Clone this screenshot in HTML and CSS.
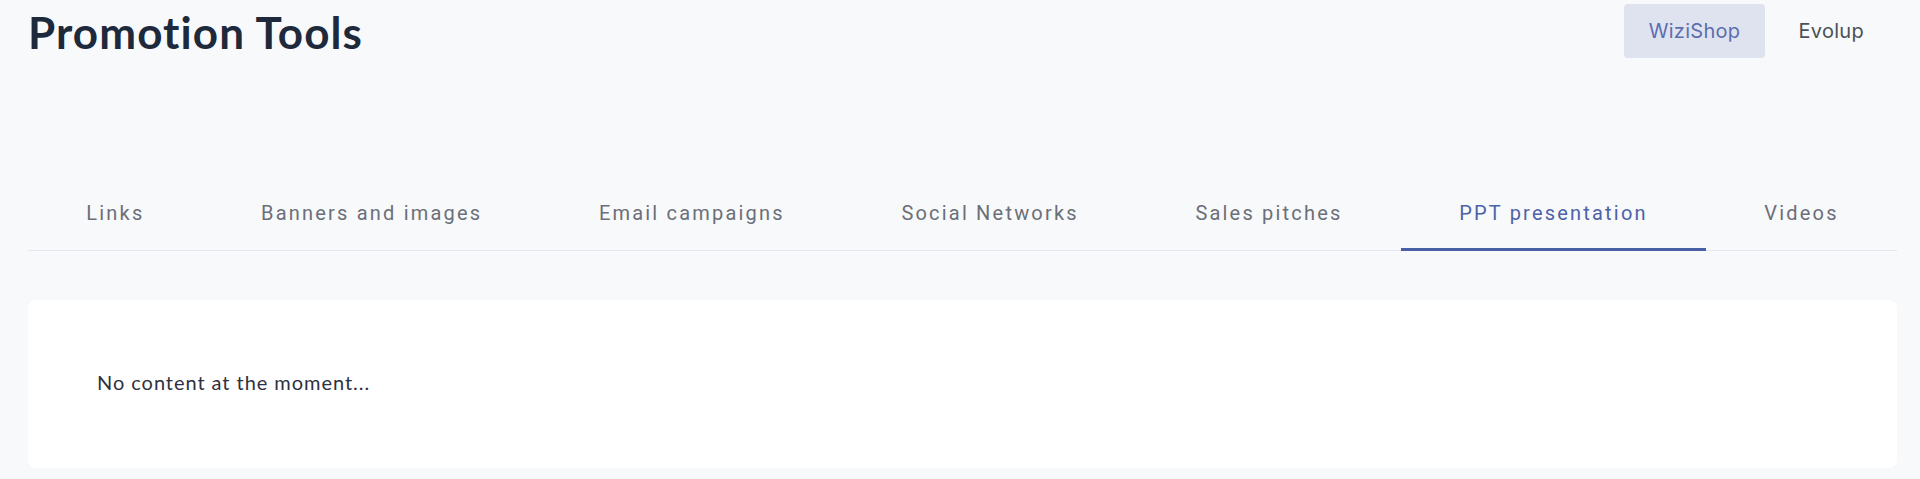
FILE: index.html
```html
<!DOCTYPE html>
<html lang="en">
<head>
<meta charset="utf-8">
<title>Promotion Tools</title>
<link rel="stylesheet" href="styles.css">
</head>
<body>
<div class="page">
  <header class="header">
    <h1 class="title">Promotion Tools</h1>
    <div class="switch">
      <button class="switch-btn is-active">WiziShop</button>
      <button class="switch-btn">Evolup</button>
    </div>
  </header>
  <nav class="tabs">
    <a class="tab">Links</a>
    <a class="tab">Banners and images</a>
    <a class="tab">Email campaigns</a>
    <a class="tab">Social Networks</a>
    <a class="tab">Sales pitches</a>
    <a class="tab is-active">PPT presentation</a>
    <a class="tab">Videos</a>
  </nav>
  <section class="card">
    <p class="empty">No content at the moment...</p>
  </section>
</div>
</body>
</html>
```

FILE: styles.css
```css
html, body {
  margin: 0;
  padding: 0;
  background: #f8f9fb;
}
body {
  font-family: "Lato", "Noto Sans", sans-serif;
}
.page {
  padding: 0 23px 0 28px;
}
.header {
  display: flex;
  justify-content: space-between;
  align-items: flex-start;
  padding-top: 4px;
}
.title {
  margin: 2px 0 0 0;
  font-family: "Lato", sans-serif;
  font-weight: 700;
  font-size: 44px;
  line-height: 52px;
  color: #1e293b;
  letter-spacing: 1.1px;
}
.switch {
  display: flex;
  gap: 8px;
  margin-right: 8px;
}
.switch-btn {
  border: 0;
  border-radius: 4px;
  background: transparent;
  font-family: "Inter", sans-serif;
  font-size: 20px;
  line-height: 22px;
  padding: 16px 25px;
  color: #4b5058;
  letter-spacing: 0.3px;
  cursor: pointer;
}
.switch-btn.is-active {
  background: #dfe3ef;
  color: #5b6eb0;
}
.tabs {
  display: flex;
  margin-top: 129px;
  border-bottom: 1px solid #e2e8f0;
}
.tab {
  flex: 1 1 auto;
  text-align: center;
  font-family: "Roboto", sans-serif;
  font-size: 20px;
  line-height: 24px;
  letter-spacing: 2.2px;
  color: #6b6f78;
  padding: 14px 0 23px;
  border-bottom: 3px solid transparent;
  margin-bottom: -1px;
  cursor: pointer;
}
.tab.is-active {
  color: #4d62a8;
  border-bottom-color: #4a5ea6;
}
.card {
  margin-top: 49px;
  background: #ffffff;
  border-radius: 8px;
  padding: 70px 69px 74px;
}
.empty {
  margin: 0;
  font-family: "Lato", sans-serif;
  font-size: 20px;
  line-height: 24px;
  color: #2e3140;
  letter-spacing: 0.95px;
}
```
